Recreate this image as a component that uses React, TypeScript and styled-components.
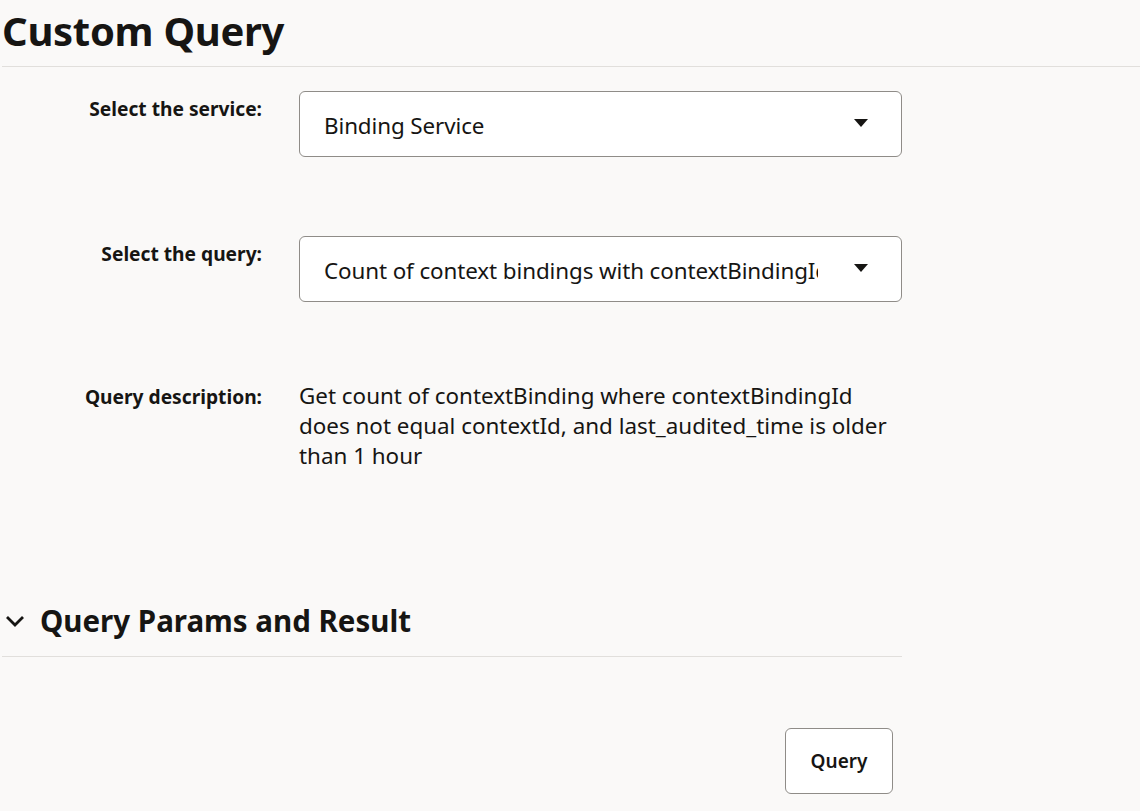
import React from "react";
import styled, { createGlobalStyle } from "styled-components";

const GlobalStyle = createGlobalStyle`
	html, body {
		margin: 0;
		padding: 0;
		background: #faf9f8;
	}
	body {
		font-family: "Noto Sans", "Open Sans", sans-serif;
		color: #161513;
	}
`;

const Page = styled.div`
	padding: 0 0 0 2px;
`;

const PageHeader = styled.header`
	height: 66px;
	border-bottom: 1px solid #e1dfdc;
	display: flex;
	align-items: center;
`;

const Title = styled.h1`
	margin: 0;
	font-size: 40px;
	font-weight: 700;
	line-height: 48px;
	letter-spacing: -0.3px;
	margin-top: -4px;
`;

const Content = styled.div`
	width: 900px;
	padding-top: 24px;
`;

const FormRow = styled.div<{ $last?: boolean }>`
	display: grid;
	grid-template-columns: 260px 603px;
	column-gap: 37px;
	align-items: start;
	margin-bottom: ${(p) => (p.$last ? 0 : 79)}px;
`;

const Label = styled.label<{ $offset: number }>`
	padding-top: ${(p) => p.$offset}px;
	text-align: right;
	font-size: 19.2px;
	font-weight: 700;
	line-height: 24px;
`;

const SelectBox = styled.div`
	box-sizing: border-box;
	height: 66px;
	background: #ffffff;
	border: 1px solid #8f8c88;
	border-radius: 6px;
	display: flex;
	align-items: center;
	padding: 3px 33px 0 24px;
	gap: 36px;
`;

const SelectText = styled.span`
	flex: 1;
	font-size: 22.4px;
	letter-spacing: -0.1px;
	white-space: nowrap;
	overflow: hidden;
`;

const Arrow = styled.span`
	width: 0;
	height: 0;
	border-left: 7.5px solid transparent;
	border-right: 7.5px solid transparent;
	border-top: 8px solid #161513;
	margin-top: -5px;
`;

const Description = styled.p`
	margin: 0;
	font-size: 22.4px;
	line-height: 30px;
`;

const SectionHeader = styled.div`
	display: flex;
	align-items: center;
	gap: 15px;
	height: 70px;
	margin-top: 115px;
	border-bottom: 1px solid #e1dfdc;
	padding-left: 3px;
`;

const SectionTitle = styled.h2`
	margin: 0;
	font-size: 29.5px;
	font-weight: 700;
	line-height: 36px;
`;

const Actions = styled.div`
	display: flex;
	justify-content: flex-end;
	padding: 71px 9px 0 0;
`;

const Button = styled.button`
	width: 108px;
	height: 66px;
	background: #ffffff;
	border: 1px solid #8f8c88;
	border-radius: 6px;
	font-family: inherit;
	font-size: 19px;
	font-weight: 600;
	color: #161513;
`;

const Select: React.FC<{ value: string }> = ({ value }) => (
	<SelectBox>
		<SelectText>{value}</SelectText>
		<Arrow />
	</SelectBox>
);

const App: React.FC = () => {
	return (
		<Page>
			<GlobalStyle />
			<PageHeader>
				<Title>Custom Query</Title>
			</PageHeader>
			<Content>
				<FormRow>
					<Label $offset={6}>Select the service:</Label>
					<Select value="Binding Service" />
				</FormRow>
				<FormRow>
					<Label $offset={6}>Select the query:</Label>
					<Select value="Count of context bindings with contextBindingId" />
				</FormRow>
				<FormRow $last>
					<Label $offset={4}>Query description:</Label>
					<Description>
						Get count of contextBinding where contextBindingId does not equal contextId, and
						last_audited_time is older than 1 hour
					</Description>
				</FormRow>
				<SectionHeader>
					<svg width="20" height="14" viewBox="0 0 20 14" fill="none">
						<path d="M2 3l8 8 8-8" stroke="#161513" strokeWidth="2.8" />
					</svg>
					<SectionTitle>Query Params and Result</SectionTitle>
				</SectionHeader>
				<Actions>
					<Button>Query</Button>
				</Actions>
			</Content>
		</Page>
	);
};

export default App;
